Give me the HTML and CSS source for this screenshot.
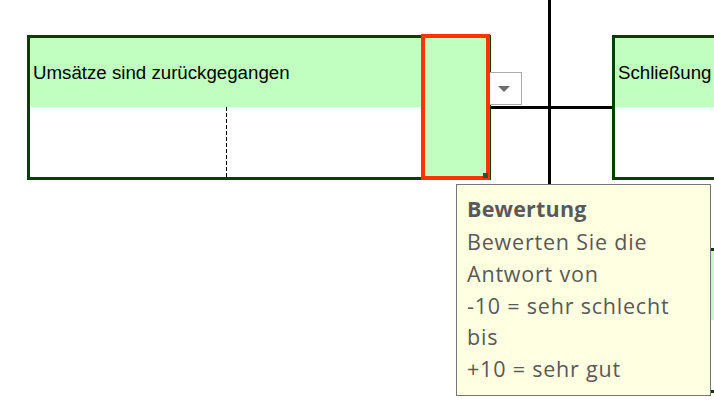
FILE: index.html
```html
<!DOCTYPE html>
<html lang="de">

<head>
    <meta charset="UTF-8">
    <meta name="viewport" content="width=device-width, initial-scale=1.0">
    <title>Ursachenbaum</title>
    <link rel="stylesheet" href="styles.css">
</head>

<body>
    <div class="sheet">
        <!-- connectors sit behind the nodes -->
        <div class="line line-v"></div>
        <div class="line line-h"></div>
        <div class="line line-low"></div>

        <div class="node node-main">
            <div class="node-text">
                <div class="node-head">Umsätze sind zurückgegangen</div>
                <div class="node-body">
                    <div class="node-cell split"></div>
                    <div class="node-cell"></div>
                </div>
            </div>
            <div class="node-rate"></div>
            <div class="selection"><span class="fill-handle"></span></div>
        </div>

        <div class="dropdown"><span class="arrow"></span></div>

        <div class="node node-right">
            <div class="node-text">
                <div class="node-head">Schließung</div>
                <div class="node-body"></div>
            </div>
        </div>

        <div class="node node-lower">
            <div class="node-text">
                <div class="node-head"></div>
                <div class="node-body"></div>
            </div>
        </div>

        <div class="tooltip">
            <div class="tooltip-title">Bewertung</div>
            <div class="tooltip-line">Bewerten Sie die</div>
            <div class="tooltip-line">Antwort von</div>
            <div class="tooltip-line">-10 = sehr schlecht</div>
            <div class="tooltip-line">bis</div>
            <div class="tooltip-line">+10 = sehr gut</div>
        </div>
    </div>
</body>

</html>
```

FILE: styles.css
```css
body {
    margin: 0;
    background-color: #ffffff;
    font-family: 'Liberation Sans', Arial, sans-serif;
    color: #000000;
}

.sheet {
    --node-border: #004000;
    --node-fill: #c0ffc0;
    --select: #ff3300;
    position: relative;
    width: 714px;
    height: 402px;
    overflow: hidden;
}

.line {
    position: absolute;
    background-color: #000000;
}

.line-v {
    left: 548px;
    top: 0;
    width: 3px;
    height: 190px;
}

.line-h {
    left: 490px;
    top: 106px;
    width: 124px;
    height: 3px;
}

.line-low {
    left: 700px;
    top: 288px;
    width: 14px;
    height: 3px;
}

.node {
    position: absolute;
    top: 35px;
    display: flex;
    box-sizing: border-box;
    height: 145px;
    border: 3px solid var(--node-border);
    background-color: #ffffff;
}

.node-main {
    left: 27px;
    width: 464px;
}

.node-right {
    left: 612px;
    width: 220px;
}

.node-lower {
    top: 248px;
    left: 706px;
    width: 120px;
}

.node-text {
    flex: 1;
    display: flex;
    flex-direction: column;
}

.node-head {
    height: 69px;
    display: flex;
    align-items: center;
    padding-left: 3px;
    background-color: var(--node-fill);
    font-size: 18.7px;
    white-space: nowrap;
}

.node-body {
    flex: 1;
    display: flex;
}

.node-cell {
    width: 196px;
}

.node-cell.split {
    width: 197px;
    background: repeating-linear-gradient(to bottom, #000000 0 4px, transparent 4px 6px) right top / 1px 100% no-repeat;
}

.node-rate {
    width: 67px;
    background-color: var(--node-fill);
}

.selection {
    position: absolute;
    left: 391px;
    top: -4px;
    box-sizing: border-box;
    width: 69px;
    height: 146px;
    border: 4px solid var(--select);
}

.fill-handle {
    position: absolute;
    right: -2px;
    bottom: -2px;
    width: 5px;
    height: 5px;
    background-color: #1d5b2a;
}

.dropdown {
    position: absolute;
    left: 490px;
    top: 72px;
    box-sizing: border-box;
    width: 32px;
    height: 33px;
    display: flex;
    justify-content: center;
    align-items: center;
    border: 1px solid #ababab;
    border-left: none;
    background-color: #ffffff;
}

.arrow {
    width: 0;
    height: 0;
    border-left: 6px solid transparent;
    border-right: 6px solid transparent;
    border-top: 6px solid #6e6e6e;
    margin-left: -3px;
}

.tooltip {
    position: absolute;
    left: 456px;
    top: 184px;
    box-sizing: border-box;
    width: 255px;
    height: 212px;
    padding: 7px 10px;
    border: 1px solid #767676;
    background-color: #ffffe1;
    color: #595959;
    font-family: 'Open Sans', 'Noto Sans', sans-serif;
    font-size: 21.5px;
    letter-spacing: 0.8px;
}

.tooltip-title {
    font-weight: 700;
    line-height: 34px;
    letter-spacing: 0.2px;
}

.tooltip-line {
    line-height: 31.8px;
}
```
